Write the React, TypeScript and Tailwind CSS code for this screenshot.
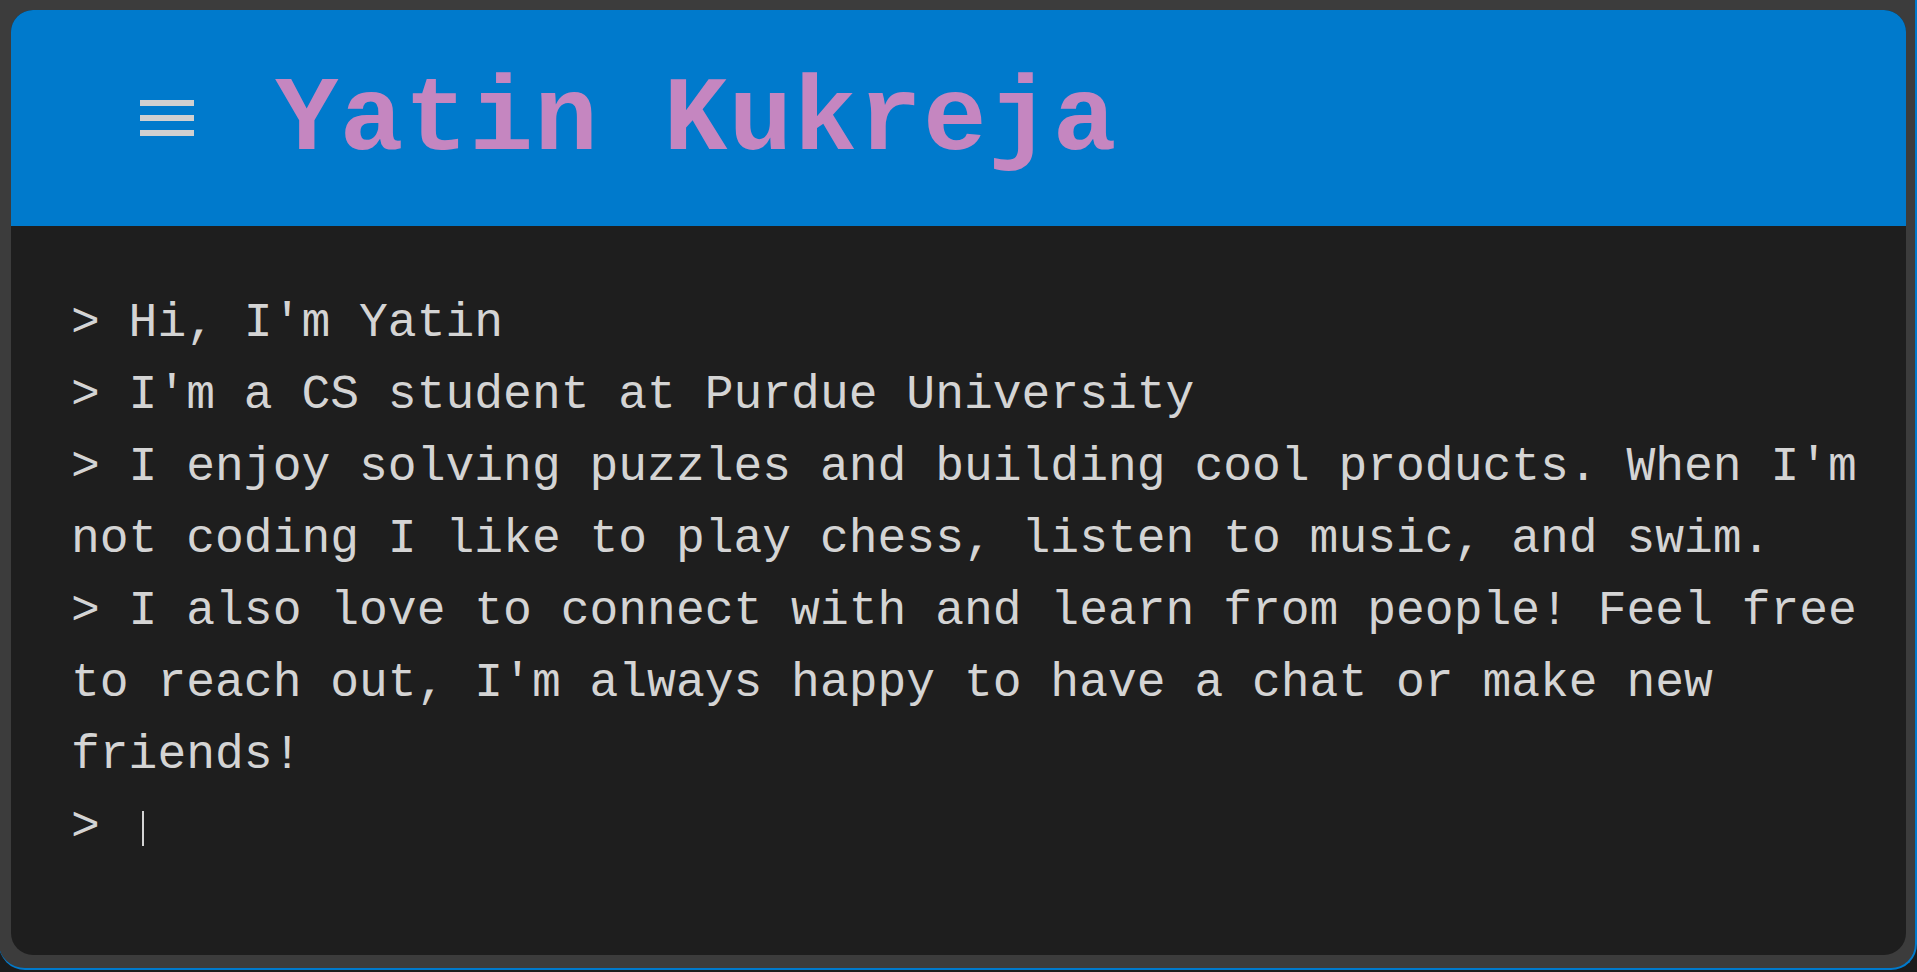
import React from "react";

const lines: string[] = [
  "> Hi, I'm Yatin",
  "> I'm a CS student at Purdue University",
  "> I enjoy solving puzzles and building cool products. When I'm not coding I like to play chess, listen to music, and swim.",
  "> I also love to connect with and learn from people! Feel free to reach out, I'm always happy to have a chat or make new friends!",
];

export default function App() {
  return (
    <div className="w-[1917px] h-[972px] overflow-hidden bg-[#1b1b1b]">
      <div className="-ml-px -mt-px w-[1918px] h-[971px] rounded-b-[26px] border-2 border-t-0 border-l-0 border-[#007acc] bg-[#3c3c3c] pt-[11px] pl-[12px] pr-[10px]">
        <div className="flex h-[945px] w-[1895px] flex-col overflow-hidden rounded-[22px] bg-[#1e1e1e]">
          <header className="flex h-[216px] shrink-0 items-center bg-[#007acc] pl-[129px]">
            <div className="flex w-[54px] flex-col gap-[9px]">
              <span className="block h-[6px] w-full bg-[#d0d0d0]" />
              <span className="block h-[6px] w-full bg-[#d0d0d0]" />
              <span className="block h-[6px] w-full bg-[#d0d0d0]" />
            </div>
            <h1
              className="ml-[81px] mt-[6px] text-[106px] font-bold leading-[1.133] tracking-[1.2px] text-[#c586c0] whitespace-pre"
              style={{ fontFamily: '"Liberation Mono", "Courier New", monospace' }}
            >
              Yatin Kukreja
            </h1>
          </header>
          <main
            className="flex-1 pl-[60px] pr-[40px] pt-[61px] text-[48px] leading-[72px] text-[#d4d4d4]"
            style={{ fontFamily: '"Liberation Mono", "Courier New", monospace' }}
          >
            {lines.map((l, i) => (
              <p key={i} className="whitespace-pre-wrap">
                {l}
              </p>
            ))}
            <p className="whitespace-pre">
              {"> "}
              <span className="ml-[13px] inline-block h-[35px] w-[2px] translate-y-[6px] bg-[#d4d4d4] align-baseline" />
            </p>
          </main>
        </div>
      </div>
    </div>
  );
}
